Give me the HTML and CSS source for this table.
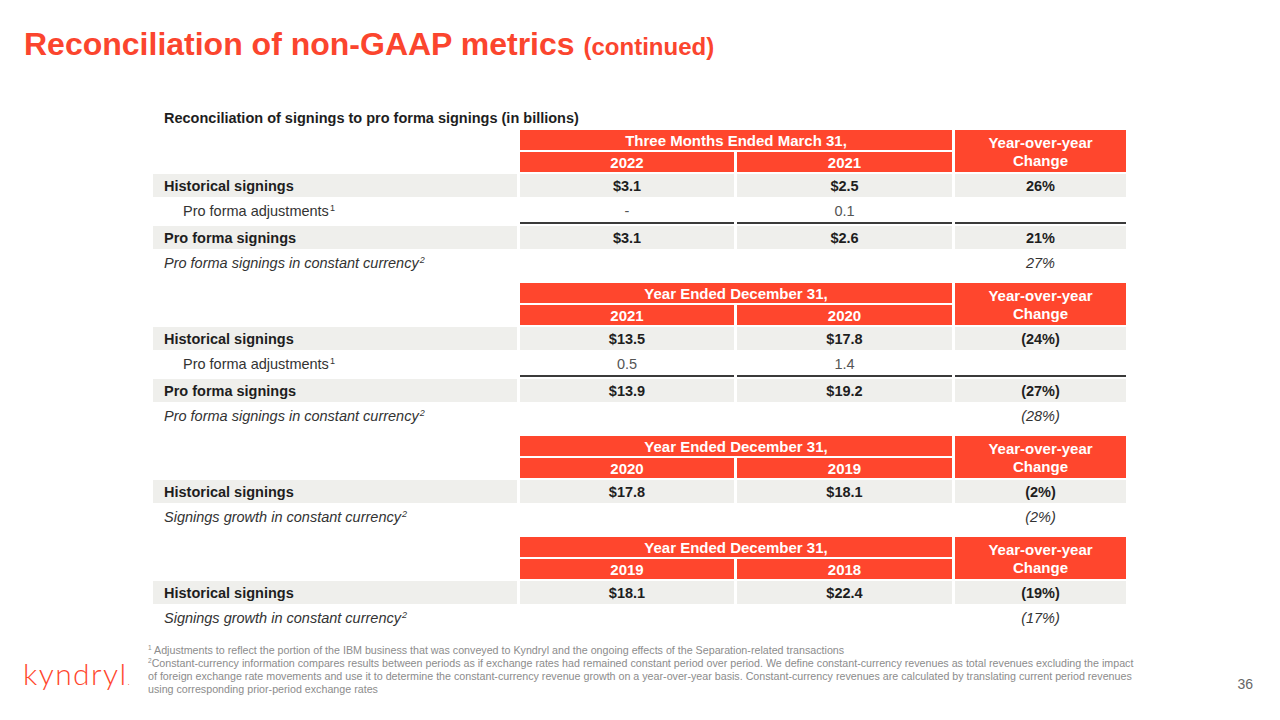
FILE: index.html
```html
<!DOCTYPE html>
<html lang="en">
<head>
<meta charset="utf-8">
<title>Reconciliation of non-GAAP metrics</title>
<link rel="stylesheet" href="styles.css">
</head>
<body>
<div class="slide">
  <h1 class="title">Reconciliation of non-GAAP metrics <span class="cont">(continued)</span></h1>

  <section class="content">
    <div class="caption">Reconciliation of signings to pro forma signings (in billions)</div>

    <div class="tbl">
      <div class="blank h2"></div>
      <div class="hd period">Three Months Ended March 31,</div>
      <div class="hd yoy">Year-over-year<br>Change</div>
      <div class="hd">2022</div>
      <div class="hd">2021</div>

      <div class="cell lbl gray bold">Historical signings</div>
      <div class="cell num gray bold">$3.1</div>
      <div class="cell num gray bold">$2.5</div>
      <div class="cell num gray bold">26%</div>

      <div class="cell lbl indent"><span>Pro forma adjustments<sup class="fn">1</sup></span></div>
      <div class="cell num adj ruled">-</div>
      <div class="cell num adj ruled">0.1</div>
      <div class="cell num ruled"></div>

      <div class="cell lbl gray bold">Pro forma signings</div>
      <div class="cell num gray bold">$3.1</div>
      <div class="cell num gray bold">$2.6</div>
      <div class="cell num gray bold">21%</div>

      <div class="cell lbl ital"><span>Pro forma signings in constant currency<sup class="fn">2</sup></span></div>
      <div class="cell num"></div>
      <div class="cell num"></div>
      <div class="cell num ital">27%</div>
    </div>

    <div class="tbl">
      <div class="blank h2"></div>
      <div class="hd period">Year Ended December 31,</div>
      <div class="hd yoy">Year-over-year<br>Change</div>
      <div class="hd">2021</div>
      <div class="hd">2020</div>

      <div class="cell lbl gray bold">Historical signings</div>
      <div class="cell num gray bold">$13.5</div>
      <div class="cell num gray bold">$17.8</div>
      <div class="cell num gray bold">(24%)</div>

      <div class="cell lbl indent"><span>Pro forma adjustments<sup class="fn">1</sup></span></div>
      <div class="cell num adj ruled">0.5</div>
      <div class="cell num adj ruled">1.4</div>
      <div class="cell num ruled"></div>

      <div class="cell lbl gray bold">Pro forma signings</div>
      <div class="cell num gray bold">$13.9</div>
      <div class="cell num gray bold">$19.2</div>
      <div class="cell num gray bold">(27%)</div>

      <div class="cell lbl ital"><span>Pro forma signings in constant currency<sup class="fn">2</sup></span></div>
      <div class="cell num"></div>
      <div class="cell num"></div>
      <div class="cell num ital">(28%)</div>
    </div>

    <div class="tbl">
      <div class="blank h2"></div>
      <div class="hd period">Year Ended December 31,</div>
      <div class="hd yoy">Year-over-year<br>Change</div>
      <div class="hd">2020</div>
      <div class="hd">2019</div>

      <div class="cell lbl gray bold">Historical signings</div>
      <div class="cell num gray bold">$17.8</div>
      <div class="cell num gray bold">$18.1</div>
      <div class="cell num gray bold">(2%)</div>

      <div class="cell lbl ital"><span>Signings growth in constant currency<sup class="fn">2</sup></span></div>
      <div class="cell num"></div>
      <div class="cell num"></div>
      <div class="cell num ital">(2%)</div>
    </div>

    <div class="tbl">
      <div class="blank h2"></div>
      <div class="hd period">Year Ended December 31,</div>
      <div class="hd yoy">Year-over-year<br>Change</div>
      <div class="hd">2019</div>
      <div class="hd">2018</div>

      <div class="cell lbl gray bold">Historical signings</div>
      <div class="cell num gray bold">$18.1</div>
      <div class="cell num gray bold">$22.4</div>
      <div class="cell num gray bold">(19%)</div>

      <div class="cell lbl ital"><span>Signings growth in constant currency<sup class="fn">2</sup></span></div>
      <div class="cell num"></div>
      <div class="cell num"></div>
      <div class="cell num ital">(17%)</div>
    </div>
  </section>

  <footer class="footer">
    <div class="logo">kyndryl<span class="dot">.</span></div>
    <div class="notes">
      <sup class="nfn">1</sup> Adjustments to reflect the portion of the IBM business that was conveyed to Kyndryl and the ongoing effects of the Separation-related transactions<br>
      <sup class="nfn">2</sup>Constant-currency information compares results between periods as if exchange rates had remained constant period over period. We define constant-currency revenues as total revenues excluding the impact<br>
      of foreign exchange rate movements and use it to determine the constant-currency revenue growth on a year-over-year basis. Constant-currency revenues are calculated by translating current period revenues<br>
      using corresponding prior-period exchange rates
    </div>
    <div class="page">36</div>
  </footer>
</div>
</body>
</html>
```

FILE: styles.css
```css
* { box-sizing: border-box; }

html, body {
  margin: 0;
  padding: 0;
  background: #ffffff;
}

.slide {
  width: 1280px;
  height: 720px;
  overflow: hidden;
  font-family: "Liberation Sans", Arial, sans-serif;
  color: #1e1e1e;
}

.title {
  margin: 0;
  padding: 26px 0 0 24px;
  font-size: 32px;
  line-height: 37px;
  font-weight: bold;
  color: #fb452e;
}

.title .cont {
  font-size: 24px;
  line-height: 0;
}

.content {
  margin-top: 48px;
  padding-left: 153px;
}

.caption {
  padding-left: 11px;
  font-size: 14.5px;
  line-height: 15px;
  font-weight: bold;
  color: #1e1e1e;
  margin-bottom: 4px;
}

.tbl {
  display: grid;
  grid-template-columns: 364px 214px 215px 171px;
  column-gap: 3px;
  row-gap: 2px;
}

.tbl + .tbl {
  margin-top: 9px;
}

.blank.h2 {
  grid-row: span 2;
}

.hd {
  background: #ff462d;
  color: #ffffff;
  font-size: 15px;
  font-weight: bold;
  height: 20px;
  display: flex;
  align-items: center;
  justify-content: center;
  text-align: center;
}

.hd.period {
  grid-column: span 2;
}

.hd.yoy {
  grid-row: span 2;
  height: auto;
  line-height: 18px;
  padding-top: 1px;
}

.cell {
  height: 23px;
  font-size: 14.5px;
  display: flex;
  align-items: center;
}

.cell.ruled {
  height: 25px;
  border-bottom: 2px solid #3a3a3a;
}

.lbl {
  padding-left: 11px;
}

.lbl.indent {
  padding-left: 30px;
  color: #333333;
}

.num {
  justify-content: center;
}

.gray {
  background: #efefec;
}

.bold {
  font-weight: bold;
}

.ital {
  font-style: italic;
  color: #333333;
}

.adj {
  color: #555555;
}

.fn {
  font-size: 9px;
  line-height: 0;
  vertical-align: 5px;
  margin-left: 1px;
}

.footer {
  display: flex;
  align-items: flex-start;
  margin-top: 15px;
}

.logo {
  width: 148px;
  padding-left: 23px;
  margin-top: 12px;
  font-family: Lato, "Open Sans", sans-serif;
  font-weight: 300;
  font-size: 30px;
  line-height: 34px;
  letter-spacing: 1.4px;
  color: #ff462d;
}

.logo .dot {
  font-size: 10px;
  letter-spacing: 0;
}

.notes {
  font-size: 10.7px;
  line-height: 13px;
  color: #8c8c8c;
  white-space: nowrap;
}

.nfn {
  font-size: 6.5px;
  line-height: 0;
  vertical-align: 4px;
}

.page {
  margin-left: auto;
  margin-top: 32px;
  padding-right: 27px;
  font-size: 14px;
  line-height: 16px;
  color: #666666;
}
```
